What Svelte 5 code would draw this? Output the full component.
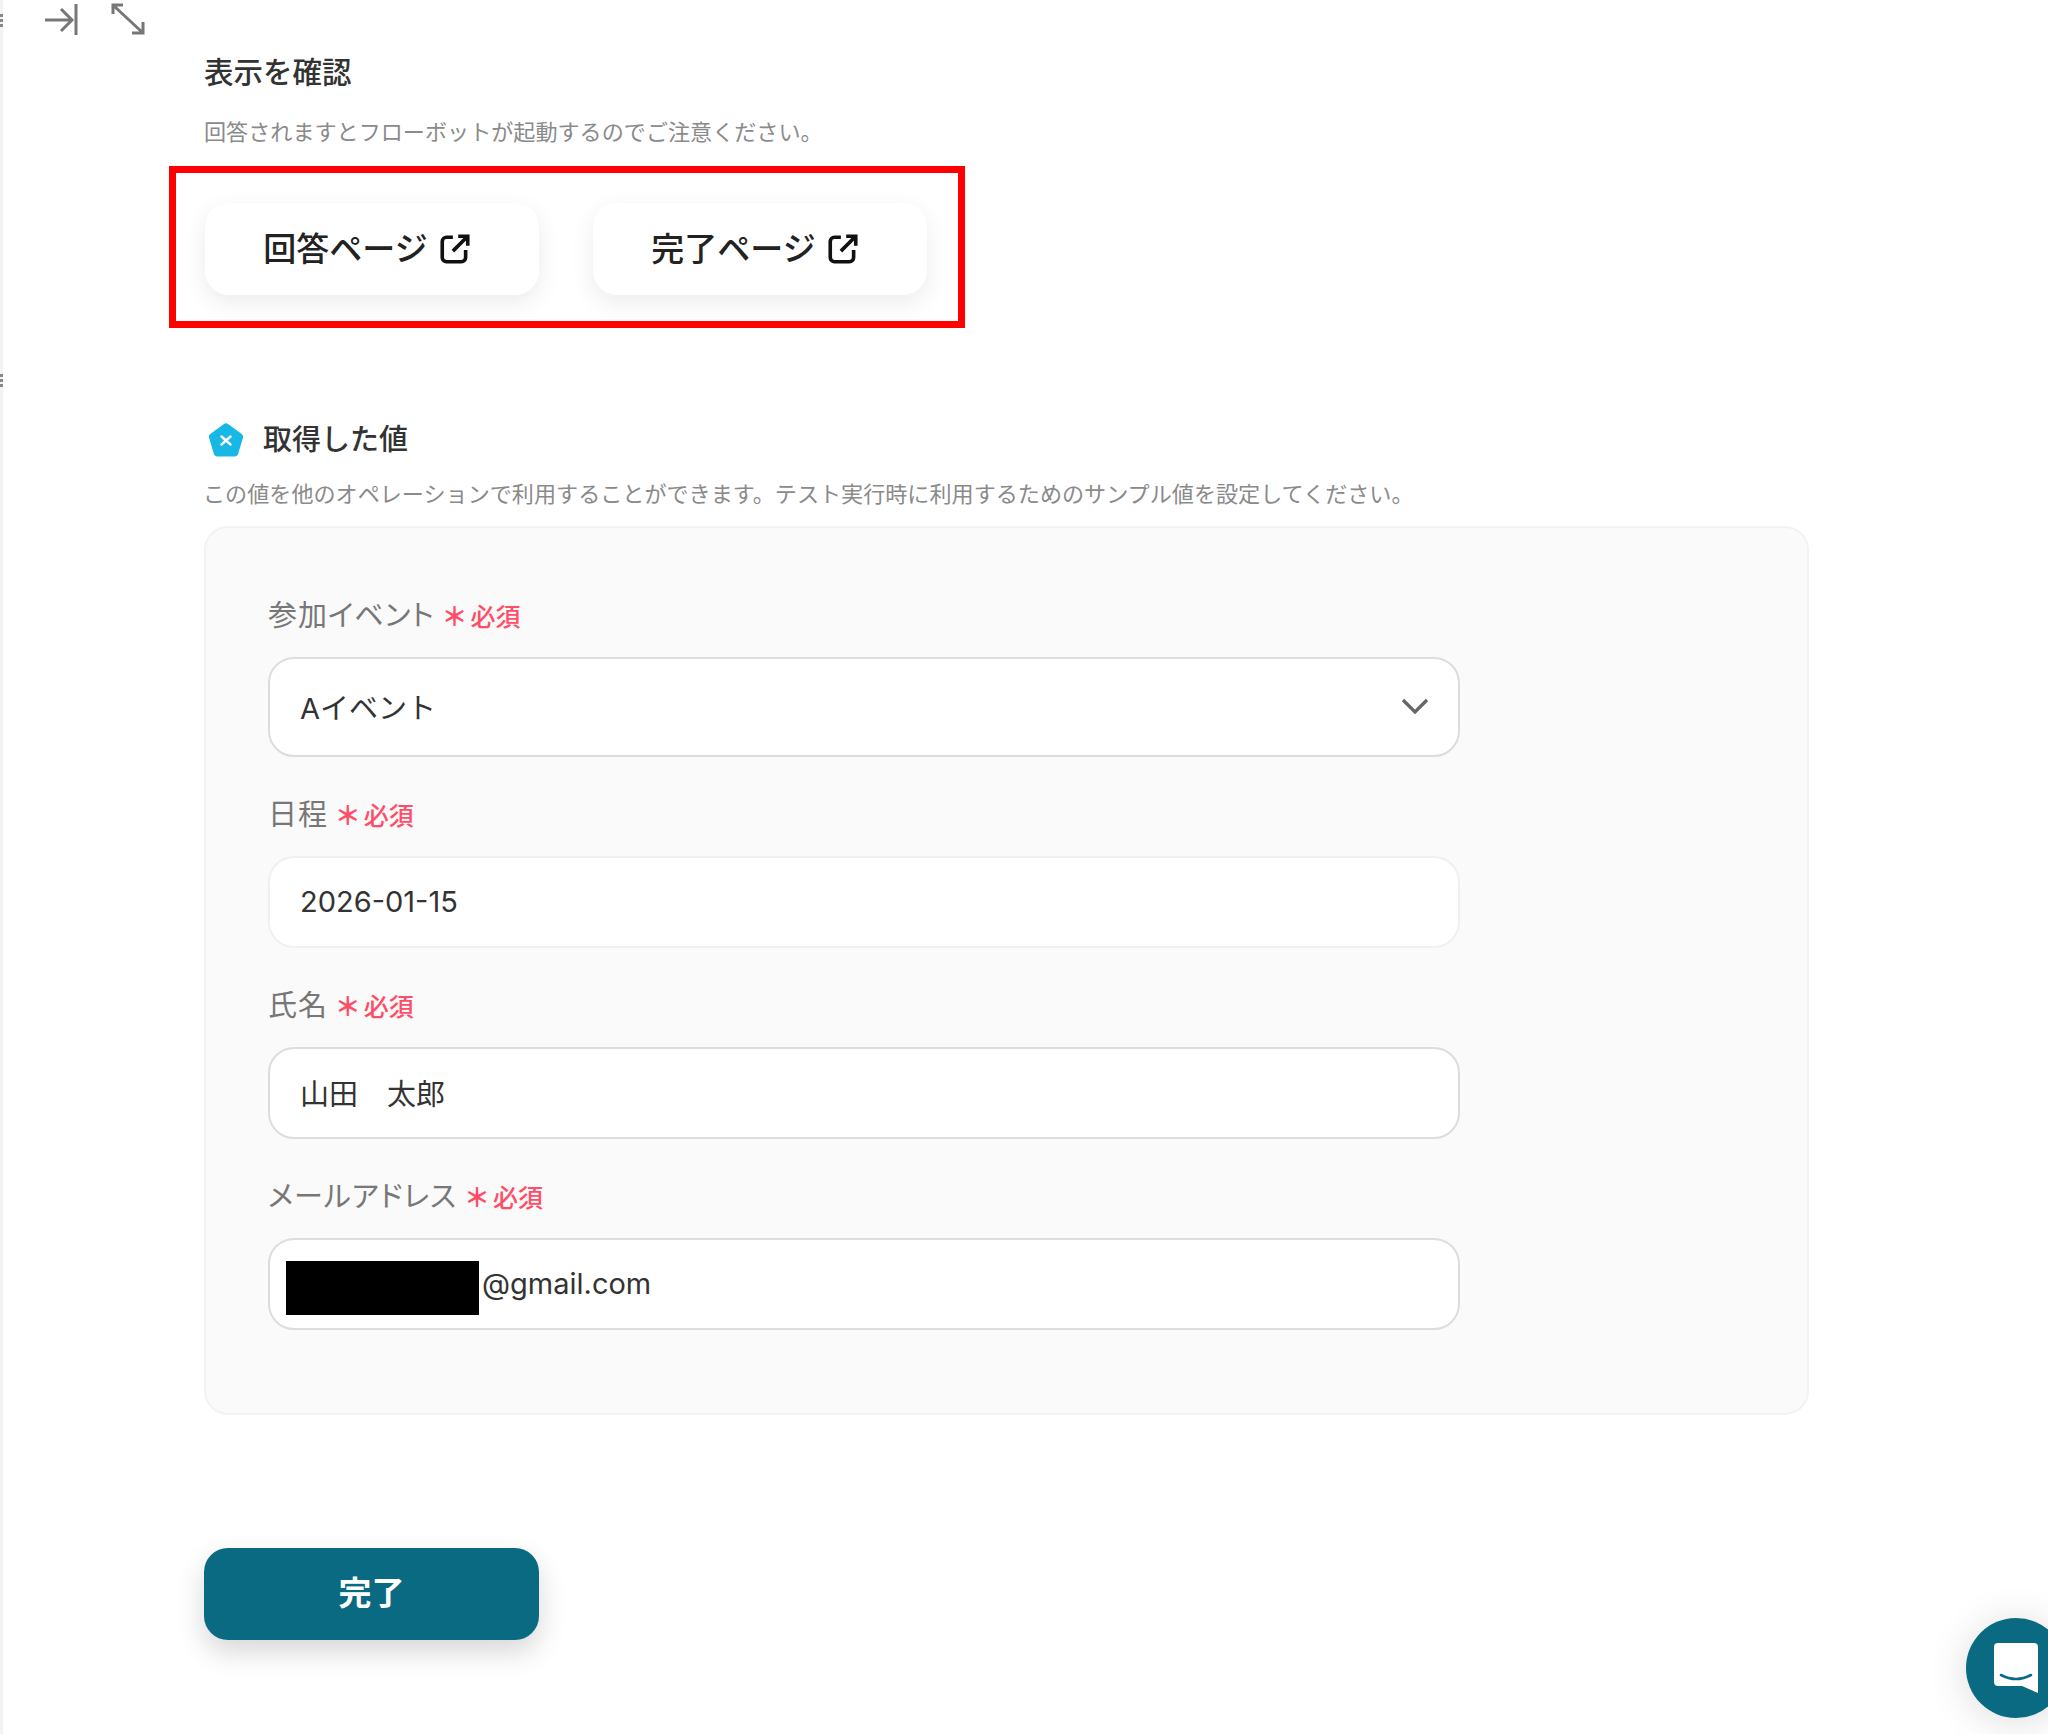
<script lang="ts">
  // Form-trigger settings panel: preview links, sample values and the submit button.
  type Field = { label: string; value: string; kind: "select" | "text" | "secret"; soft?: boolean };

  const fields: Field[] = [
    { label: "参加イベント", value: "Aイベント", kind: "select" },
    { label: "日程", value: "2026-01-15", kind: "text", soft: true },
    { label: "氏名", value: "山田　太郎", kind: "text" },
    { label: "メールアドレス", value: "@gmail.com", kind: "secret" },
  ];

  const previews = ["回答ページ", "完了ページ"];
</script>

<div class="page">
  <div class="edge"></div>
  <div class="grip top"></div>
  <div class="grip middle"></div>

  <header class="tools">
    <svg class="tool" width="36" height="36" viewBox="0 0 36 36" fill="none" stroke="#777" stroke-width="3">
      <path d="M2 20h26M18 9l11 11-11 11M33 4v31" />
    </svg>
    <svg class="tool" width="36" height="36" viewBox="0 0 36 36" fill="none" stroke="#777" stroke-width="3">
      <path d="M3 14V5h10M4 6l29 27M33 22v11H22" />
    </svg>
  </header>

  <main class="content">
    <h2 class="title">表示を確認</h2>
    <p class="note first">回答されますとフローボットが起動するのでご注意ください。</p>

    <div class="highlight">
      {#each previews as name}
        <button class="preview">
          {name}
          <svg width="34" height="34" viewBox="0 0 32 32" fill="none" stroke="#111" stroke-width="3.400">
            <path d="M14 5H8a4 4 0 0 0-4 4v15a4 4 0 0 0 4 4h14a4 4 0 0 0 4-4V17" />
            <path d="M14 18L27 5M19 4h9v9" />
          </svg>
        </button>
      {/each}
    </div>

    <div class="section-head">
      <svg width="36" height="34" viewBox="0 0 36 34">
        <path d="M15.6 1.2a4 4 0 0 1 4.8 0l13 9.6a4 4 0 0 1 1.4 4.5l-4.6 15.4a4 4 0 0 1-3.8 2.8H9.600a4 4 0 0 1-3.800-2.800L1.200 15.300a4 4 0 0 1 1.400-4.500z" fill="#17b8e6" />
        <path d="M13.500 13.500l9 8M22.500 13.500l-9 8" stroke="#fff" stroke-width="2.400" stroke-linecap="round" />
      </svg>
      <h2 class="title">取得した値</h2>
    </div>
    <p class="note second">この値を他のオペレーションで利用することができます。テスト実行時に利用するためのサンプル値を設定してください。</p>

    <section class="panel">
      {#each fields as field}
        <div class="field">
          <div class="label">
            {field.label}
            <span class="required"><span class="star">＊</span>必須</span>
          </div>
          <div class="control {field.kind}" class:soft={field.soft}>
            {#if field.kind === "secret"}
              <span class="redacted"></span>
            {/if}
            <span class="value">{field.value}</span>
            {#if field.kind === "select"}
              <svg class="chevron" width="28" height="16" viewBox="0 0 28 16" fill="none" stroke="#666" stroke-width="3.200">
                <path d="M2 2l12 12L26 2" />
              </svg>
            {/if}
          </div>
        </div>
      {/each}
    </section>

    <button class="submit">完了</button>
  </main>

  <button class="chat" aria-label="チャット">
    <svg width="46" height="52" viewBox="0 0 46 52">
      <path d="M5 1h36a4 4 0 0 1 4 4v46l-16-7H5a4 4 0 0 1-4-4V5a4 4 0 0 1 4-4z" fill="#fff" />
      <path d="M8 33q15 8 30 0" fill="none" stroke="#0a6a82" stroke-width="2.600" stroke-linecap="round" />
    </svg>
  </button>
</div>

<style>
  :global(body) {
    background: #fff;
  }

  .page {
    position: relative;
    width: 2048px;
    height: 1734px;
    overflow: hidden;
    background: #fff;
    font-family: Inter, "Noto Sans CJK JP", sans-serif;
  }

  .edge {
    position: absolute;
    left: 0;
    top: 0;
    bottom: 0;
    width: 3px;
    background: #f2f4f4;
  }

  .grip {
    position: absolute;
    left: 0;
    width: 3px;
    height: 14px;
    background: repeating-linear-gradient(#888 0 3px, transparent 3px 5px);
  }

  .grip.top {
    top: 14px;
  }

  .grip.middle {
    top: 374px;
  }

  .tools {
    display: flex;
    gap: 31px;
    height: 52px;
    padding-left: 43px;
    box-sizing: border-box;
  }

  .tool {
    flex-shrink: 0;
  }

  .content {
    padding-left: 204px;
  }

  .title {
    margin: 0;
    font-size: 29.500px;
    font-weight: 500;
    line-height: 40px;
    color: #333;
  }

  .section-head .title {
    font-size: 29px;
  }

  .note {
    margin: 0;
    font-size: 22.100px;
    line-height: 32px;
    color: #8a8a8a;
  }

  .note.first {
    margin-top: 24px;
  }

  .note.second {
    margin: 18px 0 0 -1px;
  }

  .highlight {
    display: flex;
    gap: 54px;
    box-sizing: border-box;
    width: 796px;
    height: 162px;
    margin: 18px 0 0 -35px;
    padding: 30px 0 0 29px;
    border: 7px solid #ff0000;
  }

  .preview {
    display: flex;
    align-items: center;
    justify-content: center;
    gap: 10px;
    width: 334px;
    height: 92px;
    padding: 0 9px 5px 0;
    border: none;
    border-radius: 24px;
    background: #fff;
    box-shadow: 0 8px 24px rgba(0, 0, 0, 0.08);
    font-family: inherit;
    font-size: 33px;
    font-weight: 500;
    color: #222;
  }

  .preview svg {
    margin-top: 5px;
  }

  .section-head {
    display: flex;
    align-items: center;
    gap: 19px;
    margin: 92px 0 0 4px;
  }

  .panel {
    display: flex;
    flex-direction: column;
    gap: 35px;
    box-sizing: border-box;
    width: 1605px;
    height: 889px;
    margin-top: 16px;
    padding: 65px 0 0 62px;
    border: 2px solid #f3f3f3;
    border-radius: 24px;
    background: #fafafa;
  }

  .label {
    display: flex;
    align-items: center;
    gap: 8px;
    height: 40px;
    margin-bottom: 24px;
    font-size: 29px;
    font-feature-settings: "palt";
    letter-spacing: 0.9px;
    color: #777;
  }

  .required {
    display: flex;
    align-items: center;
    margin-top: 3px;
    font-size: 25px;
    font-weight: 500;
    letter-spacing: 0;
    color: #ff4d68;
  }

  .star {
    width: 24px;
    margin-right: 4px;
    font-size: 26px;
    font-weight: 700;
    text-align: center;
  }

  .control {
    display: flex;
    align-items: center;
    box-sizing: border-box;
    width: 1192px;
    height: 92px;
    padding: 0 30px 2px;
    border: 2px solid #dddddd;
    border-radius: 26px;
    background: #fff;
    font-size: 29px;
    color: #333;
  }

  .control.select {
    height: 100px;
    justify-content: space-between;
    padding-right: 29px;
  }

  .control.soft {
    border-color: #f0f0f0;
  }

  .control.secret {
    padding-left: 16px;
  }

  .redacted {
    width: 193px;
    height: 54px;
    margin: 9px 3px 0 0;
    background: #000;
  }

  .submit {
    display: block;
    width: 335px;
    height: 92px;
    margin-top: 133px;
    padding: 0 0 6px;
    border: none;
    border-radius: 24px;
    background: #0a6a82;
    box-shadow: 0 12px 28px rgba(0, 0, 0, 0.16);
    font-family: inherit;
    font-size: 33px;
    font-weight: 700;
    color: #fff;
  }

  .chat {
    position: absolute;
    left: 1966px;
    top: 1618px;
    display: flex;
    align-items: center;
    justify-content: center;
    width: 100px;
    height: 100px;
    padding: 0;
    border: none;
    border-radius: 50%;
    background: #0a6a82;
    box-shadow: 0 4px 40px rgba(0, 0, 0, 0.14);
  }
</style>
